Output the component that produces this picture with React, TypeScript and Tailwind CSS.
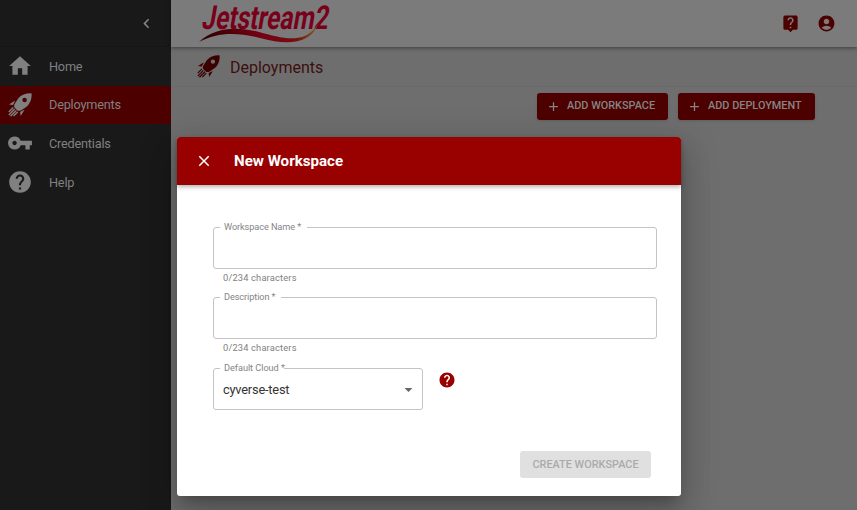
import type { ReactNode } from "react";
import {
  MdAccountCircle,
  MdAdd,
  MdArrowDropDown,
  MdChevronLeft,
  MdClose,
  MdHelp,
  MdHome,
  MdLiveHelp,
  MdVpnKey,
} from "react-icons/md";

function Rocket({ size }: { size: number }) {
  return (
    <svg width={size} height={size} viewBox="0 0 24 24" fill="currentColor">
      <path
        fillRule="evenodd"
        d="M23.6.4C18.4.1 13.500 1.600 10.200 5.600L6.500 11.200C5.800 12.800 6 14.200 7.200 15.300L8.800 16.900C9.900 18 11.300 18.100 12.800 17.500L18.200 13.900C22.300 10.500 23.900 5.600 23.600.4ZM16.600 4.700a2.250 2.250 0 1 1 0 4.500a2.250 2.250 0 1 1 0-4.500Z"
      />
      <path d="M7.200 7.600 1 11.500 5 12.100ZM16.600 16.600 12.700 23 12.100 18.900Z" />
      <path
        d="M5.200 14.500.8 18.900M6.700 16 .8 22M8.300 17.400 2.500 23.200M9.700 18.900 5.500 23.100"
        fill="none"
        stroke="currentColor"
        strokeWidth="1.350"
      />
    </svg>
  );
}

function Logo() {
  return (
    <svg width="140" height="46" viewBox="0 0 140 46" className="block overflow-visible">
      <defs>
        <linearGradient id="swoosh" x1="0" x2="1">
          <stop offset="0" stopColor="#240000" />
          <stop offset=".2" stopColor="#4a0005" />
          <stop offset=".5" stopColor="#730014" />
          <stop offset=".82" stopColor="#75100f" />
          <stop offset="1" stopColor="#806020" />
        </linearGradient>
      </defs>
      <text
        transform="translate(2 27.500) skewX(-10)"
        textLength="126.500"
        lengthAdjust="spacingAndGlyphs"
        fill="#79001b"
        fontFamily="Roboto, sans-serif"
        fontWeight="700"
        fontSize="33"
      >
        Jetstream2
      </text>
      <path
        d="M0 41C15 27 36 25 60 31C84 37.500 106 44 119 23C112 43 88 44.500 63 37.500C38 31 19 31 0 41Z"
        fill="url(#swoosh)"
      />
    </svg>
  );
}

function NavItem({ icon, label, active = false }: { icon: ReactNode; label: string; active?: boolean }) {
  return (
    <div className={`flex h-[38.6px] items-center text-[#808080] ${active ? "bg-[#4d0000]" : ""}`}>
      <div className="flex w-10 items-center justify-center">{icon}</div>
      <span className="ml-[9px] pt-px text-[12.700px] leading-5 tracking-[-0.200px]">{label}</span>
    </div>
  );
}

function AddButton({ label, width }: { label: string; width: string }) {
  return (
    <button
      className={`flex h-[27px] items-center rounded-[3px] bg-[#4d0000] pl-[9px] text-[10.900px] font-medium whitespace-nowrap text-[#858585] shadow ${width}`}
    >
      <MdAdd size={15} className="mr-[6px]" />
      <span className="-mt-px">{label}</span>
    </button>
  );
}

function Field({ label, notch }: { label: string; notch: string }) {
  return (
    <div>
      <fieldset className="-mt-[7px] h-[49px] min-w-0 rounded-[3px] border border-[#c4c4c4] px-[6px]">
        <legend className={`h-[15px] pl-[4px] text-[9.200px] leading-[13px] tracking-[-0.100px] whitespace-nowrap text-[#858585] ${notch}`}>
          {label}
        </legend>
      </fieldset>
      <p className="mt-[2px] pl-[10px] text-[9.300px] leading-[14px] tracking-[0.170px] text-[#808080]">0/234 characters</p>
    </div>
  );
}

export default function App() {
  return (
    <div className="relative h-[510px] w-[857px] overflow-hidden font-[Roboto,sans-serif]">
      <div className="flex h-full">
        <aside className="w-[171px] shrink-0 bg-[#191919]">
          <div className="flex h-[47px] items-center justify-end border-b border-[#151515] pr-[15px] text-[#858585]">
            <MdChevronLeft size={19} />
          </div>
          <nav>
            <NavItem icon={<MdHome size={26} />} label="Home" />
            <NavItem icon={<Rocket size={24} />} label="Deployments" active />
            <NavItem icon={<MdVpnKey size={26} />} label="Credentials" />
            <NavItem icon={<MdHelp size={26} />} label="Help" />
          </nav>
        </aside>
        <div className="flex min-w-0 flex-1 flex-col bg-[#6e6e6e]">
          <header className="z-10 flex h-[47px] shrink-0 items-center justify-between bg-[#7b7b7b] pr-[21px] pl-[28px] shadow-[0_1px_4px_rgba(0,0,0,0.45)]">
            <Logo />
            <div className="flex items-center gap-[17px] text-[#4d0000]">
              <MdLiveHelp size={19} />
              <MdAccountCircle size={19} />
            </div>
          </header>
          <div className="flex h-[40px] shrink-0 items-center border-b border-[#6a6a6a] pl-[26px] text-[#3c0000]">
            <Rocket size={23} />
            <h1 className="ml-[10px] pt-[2px] text-[16px] text-[#3c0e0e]">Deployments</h1>
          </div>
          <div className="flex justify-end gap-[10px] pt-[6px] pr-[42px]">
            <AddButton label="ADD WORKSPACE" width="w-[131px]" />
            <AddButton label="ADD DEPLOYMENT" width="w-[137px]" />
          </div>
        </div>
      </div>

      <section
        role="dialog"
        className="absolute top-[137px] left-[177px] z-20 flex h-[359px] w-[504px] flex-col rounded-[3px] bg-white shadow-[0_9px_12px_-5px_rgba(0,0,0,0.2),0_19px_30px_2px_rgba(0,0,0,0.14),0_7px_36px_6px_rgba(0,0,0,0.12)]"
      >
        <header className="flex h-[48px] shrink-0 items-center rounded-t-[3px] bg-[#990000] pl-[18px] text-white shadow-[0_2px_4px_rgba(0,0,0,0.3)]">
          <MdClose size={18} />
          <h2 className="ml-[21px] text-[15.100px] font-bold">New Workspace</h2>
        </header>
        <div className="flex flex-col pt-[42px] pr-[24px] pl-[36px]">
          <div className="w-[444px]">
            <Field label="Workspace Name *" notch="w-[87px]" />
          </div>
          <div className="mt-[12px] w-[444px]">
            <Field label="Description *" notch="w-[61px]" />
          </div>
          <div className="mt-[13px] flex gap-[15px]">
            <fieldset className="-mt-[7px] h-[49px] w-[210px] rounded-[3px] border border-[#c4c4c4] px-[6px]">
              <legend className="h-[15px] w-[64px] pl-[4px] text-[9.200px] leading-[13px] tracking-[-0.050px] whitespace-nowrap text-[#858585]">
                Default Cloud *
              </legend>
              <div className="flex h-[27px] items-center justify-between pl-[3px] text-[12.800px] tracking-[-0.200px] text-[#333]">
                <span>cyverse-test</span>
                <MdArrowDropDown size={19} className="-mr-[2px] text-[#666]" />
              </div>
            </fieldset>
            <MdHelp size={18} className="mt-[3px] text-[#990000]" />
          </div>
        </div>
        <button className="mt-auto mr-[30px] mb-[18px] h-[27px] w-[131px] self-end rounded-[3px] bg-[#e0e0e0] pt-px text-[10.900px] font-medium whitespace-nowrap text-[#aaaaaa]">
          CREATE WORKSPACE
        </button>
      </section>
    </div>
  );
}
